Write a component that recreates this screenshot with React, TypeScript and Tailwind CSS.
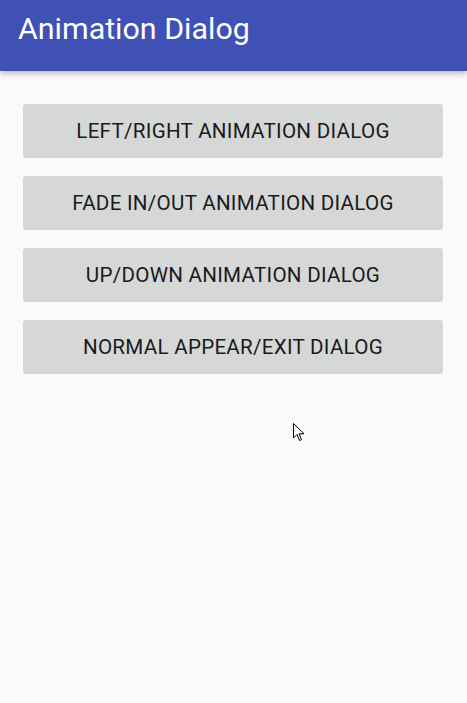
import React from "react";

const labels = [
  "LEFT/RIGHT ANIMATION DIALOG",
  "FADE IN/OUT ANIMATION DIALOG",
  "UP/DOWN ANIMATION DIALOG",
  "NORMAL APPEAR/EXIT DIALOG",
];

export default function App() {
  return (
    <div className="relative w-[467px] h-[703px] bg-[#fafafa] overflow-hidden" style={{ fontFamily: "Roboto, 'Noto Sans', sans-serif" }}>
      <header className="h-[71px] bg-[#3f51b5] flex items-center pl-[18px] shadow-[0_2px_6px_rgba(0,0,0,0.3)] relative z-10">
        <h1 className="text-white text-[30.4px] leading-none pb-[12px]">Animation Dialog</h1>
      </header>
      <main className="flex flex-col gap-[18px] px-[23px] pt-[33px] w-[466px]">
        {labels.map((l) => (
          <button
            key={l}
            className="h-[54px] w-full bg-[#d6d7d7] rounded-[3px] text-[#1a1a1a] text-[20.6px] font-normal tracking-[0.27px] flex items-center justify-center pt-[1px]"
          >
            {l}
          </button>
        ))}
      </main>
      <svg className="absolute left-[293px] top-[423px]" width="13" height="20" viewBox="0 0 13 20">
        <path d="M0.5 0.5 L0.5 15 L4 11.5 L6.5 17.5 L8.5 16.7 L6 10.8 L11 10.8 Z" fill="#fff" stroke="#000" strokeWidth="1" strokeLinejoin="miter" />
      </svg>
    </div>
  );
}
